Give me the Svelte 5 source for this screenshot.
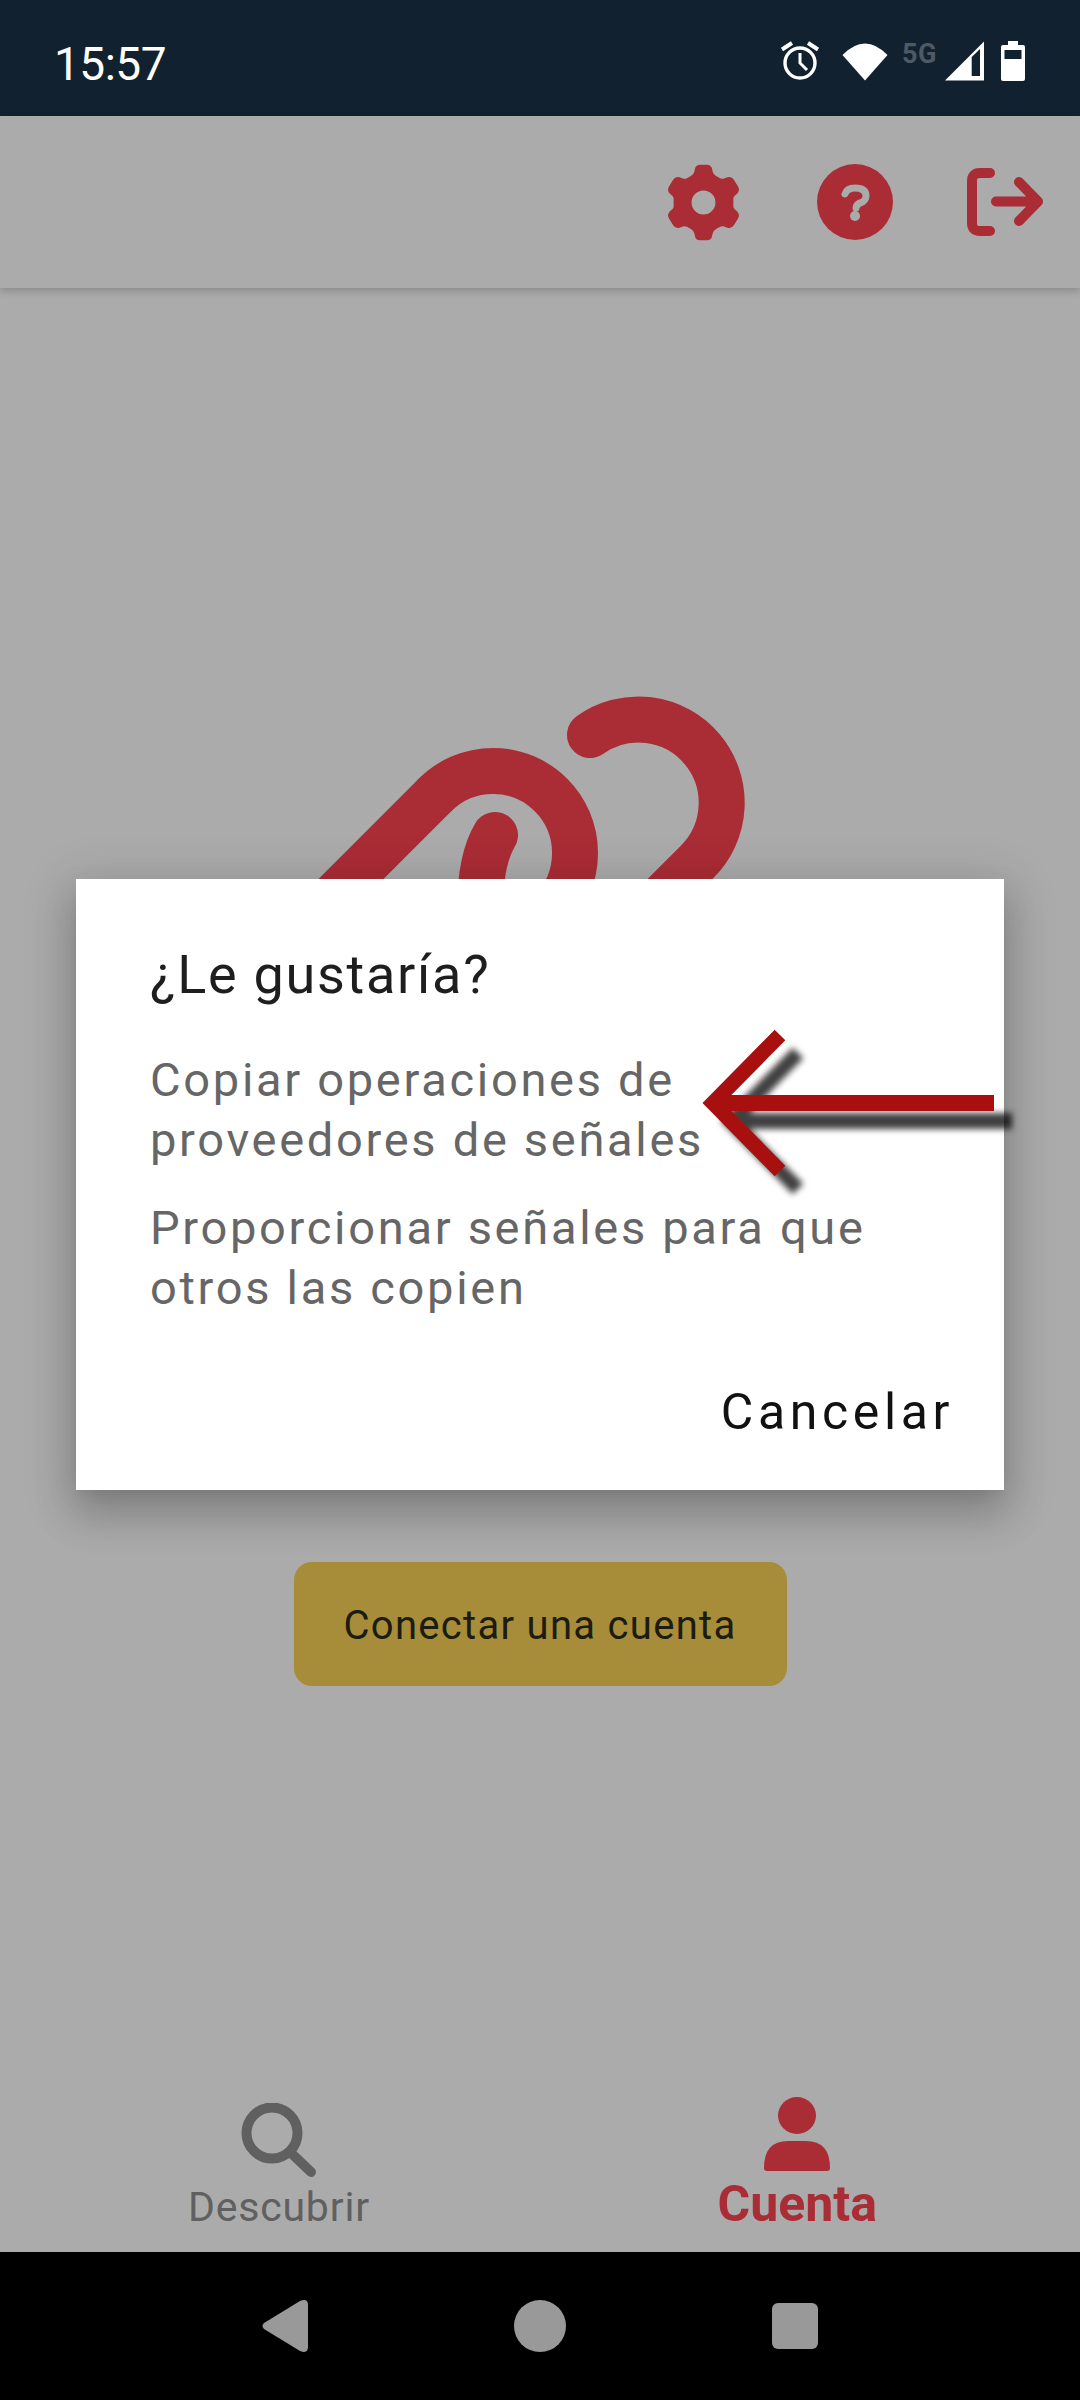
<script>
  let tabs = [
    { label: "Descubrir", icon: "search", active: false },
    { label: "Cuenta", icon: "user", active: true }
  ];
</script>

<div class="screen">
  <div class="status">
    <span class="time">15:57</span>
    <div class="status-icons">
      <svg class="alarm" width="40" height="40" viewBox="0 0 40 40" fill="none" stroke="#fff">
        <circle cx="20" cy="22" r="15" stroke-width="3.4" />
        <path d="M20 12v10l7 7" stroke-width="3" />
        <path d="M2 8.500l10-6.500M38 8.500l-10-6.500" stroke-width="4" />
      </svg>
      <svg class="wifi" width="46" height="40" viewBox="0 0 46 40">
        <path d="M0.500 14Q23 -9 45.500 14L23 39.500z" fill="#fff" />
      </svg>
      <span class="net">5G</span>
      <svg class="signal" width="40" height="40" viewBox="0 0 40 40">
        <path d="M0 39.500L39 0.500V39.500z" fill="#fff" />
        <path d="M26.700 16V35H35V8z" fill="#12212f" />
      </svg>
      <svg class="battery" width="24" height="40" viewBox="0 0 24 40">
        <path d="M7 4V0h10v4h5q2 0 2 2v32q0 2-2 2H2q-2 0-2-2V6q0-2 2-2z" fill="#fff" />
        <rect x="3.500" y="9" width="17" height="9" fill="#12212f" />
      </svg>
    </div>
  </div>

  <div class="app">
    <header>
      <button class="icon-btn gear" aria-label="Ajustes">
        <svg width="73" height="77" viewBox="50 40 220 232">
          <path fill="#fe4250" fill-rule="evenodd" d="M134 56Q136 42 150 42H170Q184 42 186 56L188 64Q190 72 198 76L210 83Q216 86 222 84L232 80Q245 76 252 88L264 108Q271 120 261 130L254 136Q249 141 250 148V164Q249 171 254 176L261 182Q271 192 264 204L252 224Q245 236 232 232L222 228Q216 226 210 229L198 236Q190 240 188 248L186 256Q184 270 170 270H150Q136 270 134 256L132 248Q130 240 122 236L110 229Q104 226 98 228L88 232Q75 236 68 224L56 204Q49 192 59 182L66 176Q71 171 70 164V148Q71 141 66 136L59 130Q49 120 56 108L68 88Q75 76 88 80L98 84Q104 86 110 83L122 76Q130 72 132 64ZM160 120a36 36 0 1 0 0 72a36 36 0 1 0 0-72z" />
        </svg>
      </button>
      <button class="icon-btn" aria-label="Ayuda">
        <svg width="76" height="76" viewBox="0 0 76 76">
          <circle cx="38" cy="38" r="38" fill="#fe4250" />
          <path d="M28 30Q30 24 38 24Q49 24 49 32Q49 37 43 39Q39 41 39 44" fill="none" stroke="#fff" stroke-width="7" stroke-linecap="round" />
          <circle cx="38" cy="52" r="5" fill="#fff" />
        </svg>
      </button>
      <button class="icon-btn" aria-label="Salir">
        <svg width="76" height="68" viewBox="0 0 76 68" fill="none" stroke="#fe4250" stroke-width="10" stroke-linecap="round" stroke-linejoin="round">
          <path d="M23 5H13Q5 5 5 13V55Q5 63 13 63H23" />
          <path d="M29 33.500H70M52 14L71 33.500L52 53" />
        </svg>
      </button>
    </header>

    <main>
      <svg class="logo" width="500" height="560" viewBox="0 0 500 560" fill="none" stroke="#fe4250" stroke-width="46" stroke-linecap="round">
        <path d="M310 65A83.300 83.300 0 0 1 417 192L300 309" />
        <path d="M155 125A82 82 0 0 1 271 241L150 362" />
        <path d="M155 125L20 260" />
        <path d="M215 165Q200 190 200 240" />
      </svg>
      <button class="connect">Conectar una cuenta</button>
    </main>

    <nav class="tabs">
      {#each tabs as tab}
        <div class="tab" class:active={tab.active}>
          {#if tab.icon === "search"}
            <svg width="76" height="74" viewBox="0 0 76 74" fill="none" stroke="#8f8f8f" stroke-width="10" stroke-linecap="round">
              <circle cx="31" cy="30" r="25.500" />
              <path d="M49 49L70 69" />
            </svg>
          {:else}
            <svg width="68" height="74" viewBox="0 0 68 74" fill="#fe4250">
              <ellipse cx="34" cy="18.500" rx="19" ry="18.500" />
              <path d="M1 71Q1 44 25 44H43Q67 44 67 71q0 3-3 3H4q-3 0-3-3z" />
            </svg>
          {/if}
          <span>{tab.label}</span>
        </div>
      {/each}
    </nav>

    <div class="scrim"></div>

    <div class="dialog">
      <h2>¿Le gustaría?</h2>
      <p>Copiar operaciones de proveedores de señales</p>
      <p>Proporcionar señales para que otros las copien</p>
      <div class="actions"><span>Cancelar</span></div>
    </div>

    <svg class="arrow" width="340" height="190" viewBox="0 0 340 190" fill="none" stroke="#a81010">
      <path d="M30 93H311" stroke-width="16" />
      <path d="M97 25L30 93L97 161" stroke-width="15" />
    </svg>
  </div>

  <div class="navbar">
    <svg width="46" height="52" viewBox="0 0 46 52"><path d="M2 29q-3-3 0-6L38 1q8-3 8 4v42q0 7-8 4z" fill="#999" /></svg>
    <span class="home"></span>
    <span class="recent"></span>
  </div>
</div>

<style>
  :global(body) {
    margin: 0;
  }

  .screen {
    width: 1080px;
    height: 2400px;
    display: flex;
    flex-direction: column;
    overflow: hidden;
    font-family: Roboto, "Noto Sans", sans-serif;
  }

  .status {
    height: 116px;
    background: #12212f;
    display: flex;
    align-items: center;
    justify-content: space-between;
    padding: 6px 55px 0 54px;
    box-sizing: border-box;
    color: #fff;
  }

  .time {
    font-size: 46px;
    letter-spacing: -0.5px;
    margin-top: 6px;
  }

  .status-icons {
    display: flex;
    align-items: center;
  }

  .wifi {
    margin-left: 22px;
  }

  .net {
    font-size: 27px;
    line-height: 20px;
    font-weight: 700;
    letter-spacing: 0.5px;
    color: #4d5a66;
    align-self: flex-start;
    margin: 3px 8px 0 14px;
  }

  .battery {
    margin-left: 16px;
  }

  .app {
    flex: 1;
    position: relative;
    display: flex;
    flex-direction: column;
    background: #fff;
  }

  header {
    height: 172px;
    display: flex;
    align-items: center;
    justify-content: flex-end;
    gap: 74px;
    padding-right: 37px;
    box-shadow: 0 3px 8px rgba(0, 0, 0, 0.2);
    position: relative;
  }

  .icon-btn {
    border: none;
    background: none;
    padding: 0;
    display: flex;
  }

  .icon-btn.gear {
    margin-right: 3px;
  }

  main {
    flex: 1;
    display: flex;
    flex-direction: column;
    align-items: center;
    padding-top: 382px;
  }

  .logo {
    display: block;
    margin: 0 20px 332px 0;
  }

  .connect {
    width: 493px;
    height: 124px;
    border: none;
    border-radius: 18px;
    background: #f9d357;
    font-family: inherit;
    font-size: 40px;
    letter-spacing: 1.3px;
    color: #2c2a18;
    padding: 2px 0 0;
  }

  .tabs {
    display: flex;
    justify-content: space-between;
    align-items: flex-end;
    padding: 0 203px 20px 188px;
  }

  .tab {
    display: flex;
    flex-direction: column;
    align-items: center;
    font-size: 41px;
    letter-spacing: 0.8px;
    line-height: 50px;
    color: #8f8f8f;
  }

  .tab svg {
    margin-bottom: 5px;
  }

  .tab.active {
    font-size: 50px;
    font-weight: 700;
    letter-spacing: 0;
    color: #fe4250;
    padding-bottom: 3px;
  }

  .tab.active svg {
    margin-bottom: 8px;
  }

  .scrim {
    position: absolute;
    inset: 0;
    background: rgba(0, 0, 0, 0.33);
  }

  .dialog {
    position: absolute;
    left: 76px;
    top: 763px;
    width: 928px;
    height: 611px;
    box-sizing: border-box;
    padding: 62px 50px 0 74px;
    background: #fff;
    box-shadow: 0 24px 38px 3px rgba(0, 0, 0, 0.15), 0 9px 46px 8px rgba(0, 0, 0, 0.13), 0 11px 15px -7px rgba(0, 0, 0, 0.08);
  }

  h2 {
    margin: 0 0 41px;
    font-size: 54px;
    font-weight: 400;
    line-height: 68px;
    letter-spacing: 1.7px;
    color: #1e1e1e;
  }

  p {
    margin: 0 0 28px;
    font-size: 47px;
    line-height: 60px;
    letter-spacing: 2.7px;
    color: #666;
    max-width: 730px;
  }

  .actions {
    text-align: right;
    margin-top: 64px;
    font-size: 50px;
    line-height: 60px;
    letter-spacing: 4.6px;
    color: #111;
  }

  .arrow {
    position: absolute;
    left: 683px;
    top: 894px;
    filter: drop-shadow(18px 18px 3px rgba(0, 0, 0, 0.75));
  }

  .navbar {
    height: 148px;
    background: #000;
    display: flex;
    align-items: center;
    justify-content: center;
  }

  .navbar svg {
    margin: 0 206px 0 -1px;
  }

  .home {
    width: 52px;
    height: 52px;
    border-radius: 50%;
    background: #999;
    margin-right: 206px;
  }

  .recent {
    width: 46px;
    height: 46px;
    border-radius: 6px;
    background: #999;
  }
</style>
